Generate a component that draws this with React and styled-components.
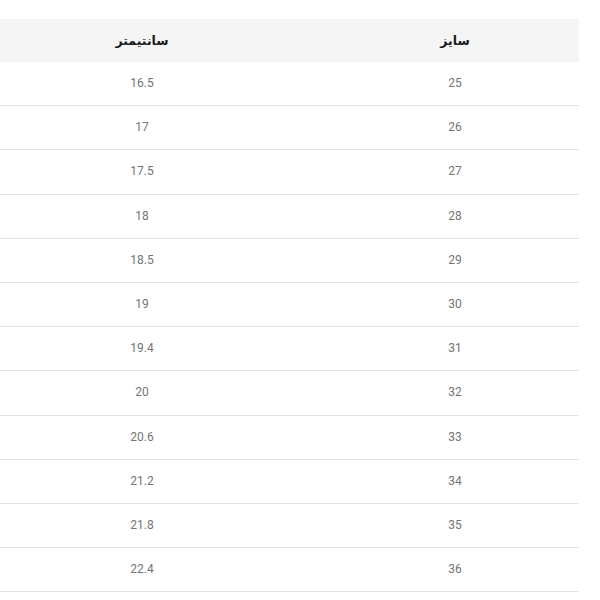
import React from 'react';
import styled, { createGlobalStyle } from 'styled-components';

const GlobalStyle = createGlobalStyle`
  html, body {
    margin: 0;
    padding: 0;
    background: #ffffff;
    overflow: hidden;
  }
`;

const Page = styled.div`
  padding-top: 19px;
  width: 600px;
  height: 600px;
  overflow: hidden;
`;

const Table = styled.table`
  direction: rtl;
  width: 626px;
  margin-left: -47px;
  border-collapse: collapse;
  table-layout: fixed;
  font-family: Roboto, "DejaVu Sans", sans-serif;
`;

const Col = styled.col`
  width: ${(p) => p.$width}px;
`;

const HeadCell = styled.th`
  height: 43px;
  padding: 0;
  background: #f5f5f5;
  color: #1a1a1a;
  font-family: "DejaVu Sans", sans-serif;
  font-size: 12.5px;
  font-weight: bold;
  text-align: center;
  vertical-align: middle;
`;

const Row = styled.tr`
  border-bottom: 1px solid #e3e3e3;
`;

const Cell = styled.td`
  height: 42.2px;
  padding: 0 0 1px;
  color: #747474;
  font-size: 12px;
  text-align: center;
  vertical-align: middle;
`;

const sizes = [
  ['25', '16.5'],
  ['26', '17'],
  ['27', '17.5'],
  ['28', '18'],
  ['29', '18.5'],
  ['30', '19'],
  ['31', '19.4'],
  ['32', '20'],
  ['33', '20.6'],
  ['34', '21.2'],
  ['35', '21.8'],
  ['36', '22.4'],
];

export default function App() {
  return (
    <>
      <GlobalStyle />
      <Page>
        <Table>
          <colgroup>
            <Col $width={248} />
            <Col $width={378} />
          </colgroup>
          <thead>
            <tr>
              <HeadCell>سایز</HeadCell>
              <HeadCell>سانتیمتر</HeadCell>
            </tr>
          </thead>
          <tbody>
            {sizes.map(([size, cm]) => (
              <Row key={size}>
                <Cell>{size}</Cell>
                <Cell>{cm}</Cell>
              </Row>
            ))}
          </tbody>
        </Table>
      </Page>
    </>
  );
}
